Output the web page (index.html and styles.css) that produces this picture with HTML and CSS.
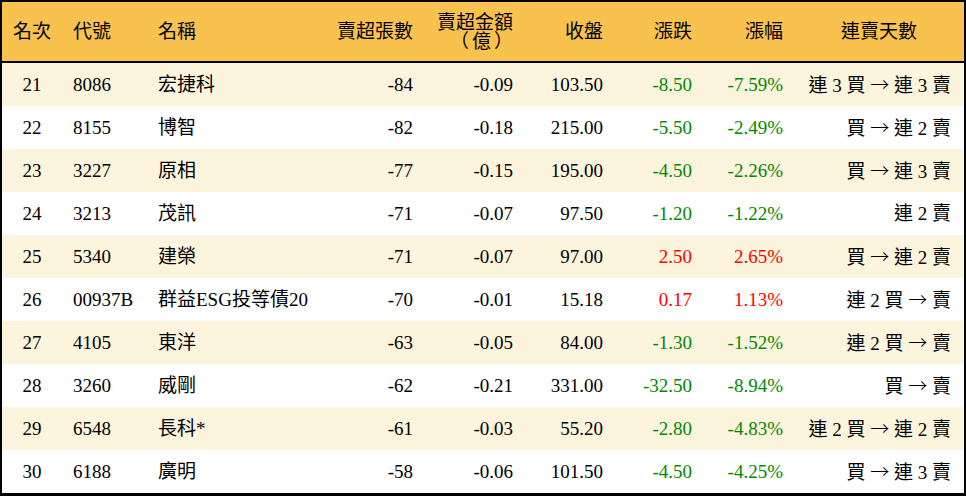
FILE: index.html
```html
<!DOCTYPE html>
<html lang="zh-Hant">
<head>
<meta charset="utf-8">
<title>賣超排行</title>
<link rel="stylesheet" href="styles.css">
</head>
<body>
<div class="board">
  <div class="line head">
    <div class="c rank">名次</div>
    <div class="c">代號</div>
    <div class="c">名稱</div>
    <div class="c r">賣超張數</div>
    <div class="c r two">賣超金額<br><span class="unit">（億）</span></div>
    <div class="c r">收盤</div>
    <div class="c r">漲跌</div>
    <div class="c r">漲幅</div>
    <div class="c mid">連賣天數</div>
  </div>
  <div class="line row">
    <div class="c rank">21</div><div class="c">8086</div><div class="c">宏捷科</div>
    <div class="c r">-84</div><div class="c r">-0.09</div><div class="c r">103.50</div>
    <div class="c r down">-8.50</div><div class="c r down">-7.59%</div><div class="c r last">連 3 買 <span class="arr">→</span> 連 3 賣</div>
  </div>
  <div class="line row">
    <div class="c rank">22</div><div class="c">8155</div><div class="c">博智</div>
    <div class="c r">-82</div><div class="c r">-0.18</div><div class="c r">215.00</div>
    <div class="c r down">-5.50</div><div class="c r down">-2.49%</div><div class="c r last">買 <span class="arr">→</span> 連 2 賣</div>
  </div>
  <div class="line row">
    <div class="c rank">23</div><div class="c">3227</div><div class="c">原相</div>
    <div class="c r">-77</div><div class="c r">-0.15</div><div class="c r">195.00</div>
    <div class="c r down">-4.50</div><div class="c r down">-2.26%</div><div class="c r last">買 <span class="arr">→</span> 連 3 賣</div>
  </div>
  <div class="line row">
    <div class="c rank">24</div><div class="c">3213</div><div class="c">茂訊</div>
    <div class="c r">-71</div><div class="c r">-0.07</div><div class="c r">97.50</div>
    <div class="c r down">-1.20</div><div class="c r down">-1.22%</div><div class="c r last">連 2 賣</div>
  </div>
  <div class="line row">
    <div class="c rank">25</div><div class="c">5340</div><div class="c">建榮</div>
    <div class="c r">-71</div><div class="c r">-0.07</div><div class="c r">97.00</div>
    <div class="c r up">2.50</div><div class="c r up">2.65%</div><div class="c r last">買 <span class="arr">→</span> 連 2 賣</div>
  </div>
  <div class="line row">
    <div class="c rank">26</div><div class="c">00937B</div><div class="c">群益ESG投等債20</div>
    <div class="c r">-70</div><div class="c r">-0.01</div><div class="c r">15.18</div>
    <div class="c r up">0.17</div><div class="c r up">1.13%</div><div class="c r last">連 2 買 <span class="arr">→</span> 賣</div>
  </div>
  <div class="line row">
    <div class="c rank">27</div><div class="c">4105</div><div class="c">東洋</div>
    <div class="c r">-63</div><div class="c r">-0.05</div><div class="c r">84.00</div>
    <div class="c r down">-1.30</div><div class="c r down">-1.52%</div><div class="c r last">連 2 買 <span class="arr">→</span> 賣</div>
  </div>
  <div class="line row">
    <div class="c rank">28</div><div class="c">3260</div><div class="c">威剛</div>
    <div class="c r">-62</div><div class="c r">-0.21</div><div class="c r">331.00</div>
    <div class="c r down">-32.50</div><div class="c r down">-8.94%</div><div class="c r last">買 <span class="arr">→</span> 賣</div>
  </div>
  <div class="line row">
    <div class="c rank">29</div><div class="c">6548</div><div class="c">長科*</div>
    <div class="c r">-61</div><div class="c r">-0.03</div><div class="c r">55.20</div>
    <div class="c r down">-2.80</div><div class="c r down">-4.83%</div><div class="c r last">連 2 買 <span class="arr">→</span> 連 2 賣</div>
  </div>
  <div class="line row">
    <div class="c rank">30</div><div class="c">6188</div><div class="c">廣明</div>
    <div class="c r">-58</div><div class="c r">-0.06</div><div class="c r">101.50</div>
    <div class="c r down">-4.50</div><div class="c r down">-4.25%</div><div class="c r last">買 <span class="arr">→</span> 連 3 賣</div>
  </div>
</div>
</body>
</html>
```
FILE: styles.css
```css
html, body {
  margin: 0;
  padding: 0;
  background: #ffffff;
}

.board {
  width: 966px;
  height: 496px;
  box-sizing: border-box;
  border: 2px solid #000000;
  border-bottom-width: 3px;
  background: #ffffff;
  color: #000000;
  font-family: "Liberation Serif", "Noto Sans CJK TC", serif;
  font-size: 19px;
  overflow: hidden;
}

.line {
  display: grid;
  grid-template-columns: 60px 85px 173px 104px 100px 90px 89px 91px 170px;
  align-items: center;
}

.head {
  height: 59px;
  background: #f9c24f;
  border-bottom: 2px solid #000000;
  line-height: 19px;
}

.two {
  padding-top: 1px;
}

.unit {
  letter-spacing: 3px;
  margin-right: -3px;
}

.row {
  height: 43px;
  line-height: 22px;
}

.row:nth-child(even) {
  background: #fdf4de;
}

.c {
  padding: 0 11px;
  white-space: nowrap;
}

.rank {
  padding: 0;
  text-align: center;
}

.r {
  text-align: right;
}

.mid {
  text-align: center;
}

.last {
  padding-right: 13px;
}

.arr {
  font-family: "Noto Sans CJK TC", "Noto Sans CJK SC", sans-serif;
  font-weight: 300;
}

.down {
  color: #008a00;
}

.up {
  color: #ff0000;
}
```
